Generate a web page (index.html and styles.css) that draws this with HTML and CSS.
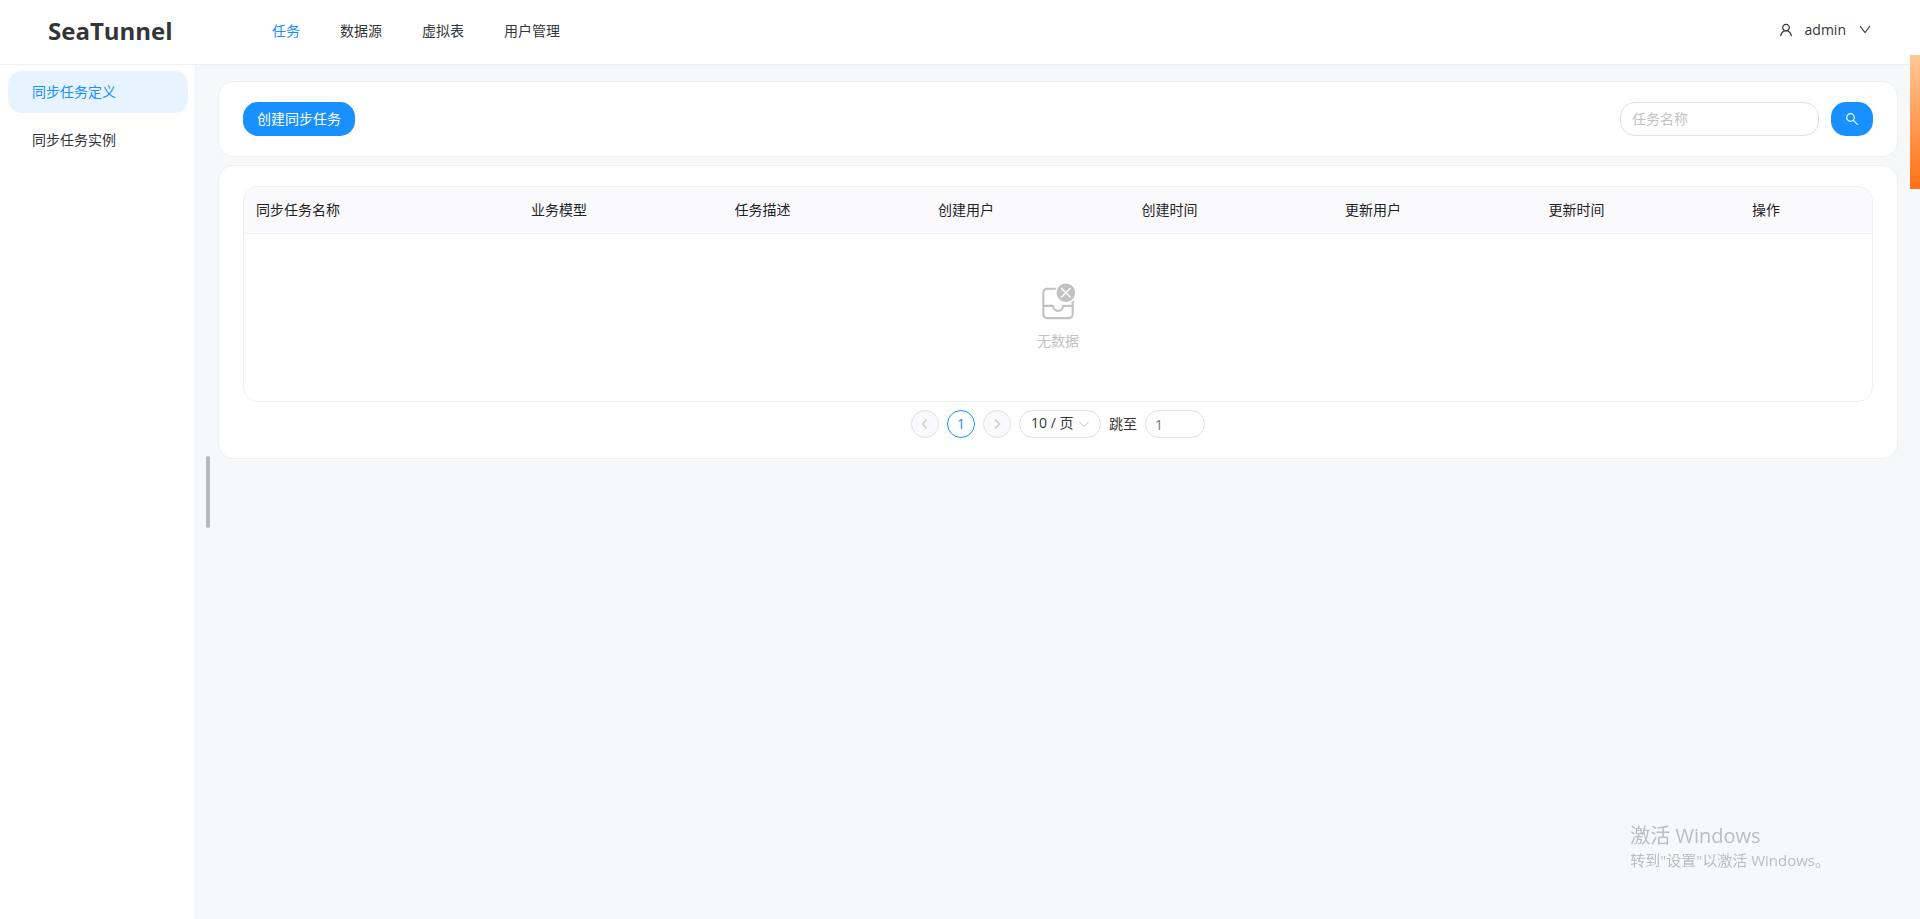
FILE: index.html
```html
<!DOCTYPE html>
<html lang="zh-CN">
<head>
<meta charset="utf-8">
<title>SeaTunnel</title>
<link rel="stylesheet" href="styles.css">
</head>
<body>
<header class="header">
  <h1 class="logo">SeaTunnel</h1>
  <nav class="nav">
    <a class="nav-link active" href="#tasks">任务</a>
    <a class="nav-link" href="#datasource">数据源</a>
    <a class="nav-link" href="#virtual">虚拟表</a>
    <a class="nav-link" href="#users">用户管理</a>
  </nav>
  <button class="user" type="button">
    <svg class="icon-user" viewBox="64 64 896 896" aria-hidden="true"><path fill="currentColor" d="M858.5 763.6a374 374 0 0 0-80.600-119.500 375.630 375.630 0 0 0-119.500-80.600c-.4-.2-.8-.3-1.200-.5C719.500 518 760 444.700 760 362c0-137-111-248-248-248S264 225 264 362c0 82.700 40.500 156 102.800 201.100-.4.2-.8.3-1.200.5-44.800 18.900-85 46-119.500 80.600a375.630 375.630 0 0 0-80.600 119.500A371.700 371.700 0 0 0 136 901.800a8 8 0 0 0 8 8.200h60c4.400 0 7.900-3.500 8-7.800 2-77.200 33-149.500 87.800-204.300 56.700-56.700 132-87.900 212.200-87.900s155.500 31.200 212.200 87.900C779 752.700 810 825 812 902.200c.1 4.400 3.600 7.800 8 7.800h60a8 8 0 0 0 8-8.200c-1-47.800-10.900-94.300-29.500-138.200zM512 534c-45.900 0-89.100-17.900-121.600-50.400S340 407.900 340 362c0-45.900 17.900-89.100 50.400-121.600S466.100 190 512 190s89.100 17.900 121.600 50.400S684 316.100 684 362c0 45.900-17.900 89.100-50.400 121.600S557.900 534 512 534z"/></svg>
    <span>admin</span>
    <svg class="icon-down" viewBox="0 0 14 14" aria-hidden="true"><path d="M2 3l5 6.500L12 3" fill="none" stroke="currentColor" stroke-width="1.1"/></svg>
  </button>
</header>
<div class="layout">
  <aside class="sidebar">
    <a class="menu-item active" href="#definition">同步任务定义</a>
    <a class="menu-item" href="#instance">同步任务实例</a>
  </aside>
  <main class="content">
    <section class="card toolbar">
      <button class="btn" type="button">创建同步任务</button>
      <form class="search">
        <input class="search-input" type="text" placeholder="任务名称" aria-label="任务名称">
        <button class="btn" type="button" aria-label="搜索">
          <svg class="icon-search" viewBox="0 0 14 14" aria-hidden="true"><g fill="none" stroke="currentColor" stroke-width="1.2" stroke-linecap="round"><circle cx="5.500" cy="5.500" r="3.800"/><path d="M8.400 8.400l4 4"/></g></svg>
        </button>
      </form>
    </section>
    <section class="card">
      <div class="table-wrap">
        <table class="table">
          <colgroup><col class="col-name"><col span="6"><col class="col-action"></colgroup>
          <thead>
            <tr><th>同步任务名称</th><th>业务模型</th><th>任务描述</th><th>创建用户</th><th>创建时间</th><th>更新用户</th><th>更新时间</th><th>操作</th></tr>
          </thead>
          <tbody>
            <tr><td class="empty" colspan="8">
              <svg class="icon-empty" viewBox="0 0 28 28" aria-hidden="true"><g fill="currentColor"><path d="M26 7.5C26 11.0899 23.0899 14 19.5 14C15.9101 14 13 11.0899 13 7.5C13 3.91015 15.9101 1 19.5 1C23.0899 1 26 3.91015 26 7.5ZM16.8536 4.14645C16.6583 3.95118 16.3417 3.95118 16.1464 4.14645C15.9512 4.34171 15.9512 4.65829 16.1464 4.85355L18.7929 7.5L16.1464 10.1464C15.9512 10.3417 15.9512 10.6583 16.1464 10.8536C16.3417 11.0488 16.6583 11.0488 16.8536 10.8536L19.5 8.20711L22.1464 10.8536C22.3417 11.0488 22.6583 11.0488 22.8536 10.8536C23.0488 10.6583 23.0488 10.3417 22.8536 10.1464L20.2071 7.5L22.8536 4.85355C23.0488 4.65829 23.0488 4.34171 22.8536 4.14645C22.6583 3.95118 22.3417 3.95118 22.1464 4.14645L19.5 6.79289L16.8536 4.14645Z"/><path d="M25 22.75V12.5991C24.5572 13.0765 24.053 13.4961 23.5 13.8454V16H17.5L17.3982 16.0068C17.0322 16.0565 16.75 16.3703 16.75 16.75C16.75 18.2688 15.5188 19.5 14 19.5C12.4812 19.5 11.25 18.2688 11.25 16.75L11.2432 16.6482C11.1935 16.2822 10.8797 16 10.5 16H4.5V7.25C4.5 6.2835 5.2835 5.5 6.25 5.5H12.2696C12.4146 4.97463 12.6153 4.47237 12.865 4H6.25C4.45507 4 3 5.45507 3 7.25V22.75C3 24.5449 4.45507 26 6.25 26H21.75C23.5449 26 25 24.5449 25 22.75ZM4.5 22.75V17.5H9.81597L9.85751 17.7041C10.2905 19.5919 11.9808 21 14 21L14.215 20.9947C16.2095 20.8953 17.842 19.4209 18.184 17.5H23.5V22.75C23.5 23.7165 22.7165 24.5 21.75 24.5H6.25C5.2835 24.5 4.5 23.7165 4.5 22.75Z"/></g></svg>
              <span class="empty-text">无数据</span>
            </td></tr>
          </tbody>
        </table>
      </div>
      <div class="pagination">
        <button class="page" type="button" disabled aria-label="上一页"><svg class="icon-page" viewBox="0 0 16 16" aria-hidden="true"><path d="M10 3L5.500 8l4.500 5" fill="none" stroke="currentColor" stroke-width="1.400"/></svg></button>
        <button class="page current" type="button">1</button>
        <button class="page" type="button" disabled aria-label="下一页"><svg class="icon-page" viewBox="0 0 16 16" aria-hidden="true"><path d="M6 3l4.500 5L6 13" fill="none" stroke="currentColor" stroke-width="1.400"/></svg></button>
        <div class="size">
          <select class="size-select" aria-label="每页条数"><option>10 / 页</option><option>20 / 页</option></select>
          <svg class="size-arrow" viewBox="0 0 12 12" aria-hidden="true"><path d="M1.500 4L6 8.500 10.500 4" fill="none" stroke="currentColor"/></svg>
        </div>
        <label for="jump">跳至</label>
        <input class="jump" id="jump" type="text" value="1">
      </div>
    </section>
  </main>
</div>
<div class="resize-handle"></div>
<div class="side-tab"></div>
<div class="watermark">
  <p class="watermark-title">激活 Windows</p>
  <p class="watermark-text">转到"设置"以激活 Windows。</p>
</div>
</body>
</html>
```
FILE: styles.css
```css
* {
  box-sizing: border-box;
}

body {
  display: flex;
  flex-direction: column;
  min-height: 100vh;
  margin: 0;
  color: #333639;
  background: #f7f8fa;
  font: 14px/22px "Open Sans", "Noto Sans CJK SC", sans-serif;
}

a {
  color: inherit;
  text-decoration: none;
}

button,
input,
select {
  margin: 0;
  font: inherit;
  color: inherit;
}

svg {
  display: block;
}

.header {
  display: flex;
  align-items: center;
  height: 65px;
  padding: 0 48px 2px;
  background: #fff;
  border-bottom: 1px solid #efeff5;
}

.logo {
  width: 224px;
  margin: 0;
  font-size: 24px;
  line-height: 32px;
  font-weight: 700;
}

.nav {
  display: flex;
  gap: 40px;
}

.nav-link.active {
  color: #1890ff;
}

.user {
  display: flex;
  align-items: center;
  gap: 12px;
  margin-left: auto;
  padding: 0 0 2px;
  border: 0;
  background: none;
}

.icon-user,
.icon-down,
.icon-search {
  width: 14px;
  height: 14px;
}

.layout {
  display: flex;
  flex: 1;
}

.sidebar {
  flex: none;
  width: 196px;
  padding: 6px 7px 0 8px;
  background: #fff;
  border-right: 1px solid #efeff5;
}

.menu-item {
  display: block;
  margin-bottom: 6px;
  padding: 10px 24px;
  border-radius: 14px;
}

.menu-item.active {
  color: #1890ff;
  background: #e7f3ff;
}

.content {
  display: flex;
  flex: 1;
  flex-direction: column;
  gap: 8px;
  min-width: 0;
  padding: 16px 22px;
}

.card {
  padding: 20px 24px;
  background: #fff;
  border: 1px solid #efeff5;
  border-radius: 15px;
}

.toolbar {
  display: flex;
  justify-content: space-between;
}

.btn {
  height: 34px;
  padding: 0 14px;
  color: #fff;
  background: #1890ff;
  border: 0;
  border-radius: 15px;
}

.search {
  display: flex;
  gap: 12px;
}

.search-input {
  width: 199px;
  height: 34px;
  padding: 0 11px 2px;
  background: #fff;
  border: 1px solid #e0e0e6;
  border-radius: 15px;
}

.search-input::placeholder {
  color: #c2c2c2;
}

.table-wrap {
  overflow: hidden;
  border: 1px solid #efeff5;
  border-radius: 15px;
}

.table {
  width: 100%;
  table-layout: fixed;
  border-collapse: separate;
  border-spacing: 0;
}

.col-name {
  width: 275px;
}

.col-action {
  width: 132px;
}

.table th {
  padding: 12px;
  color: #1f2225;
  background: #fafafc;
  border-bottom: 1px solid #efeff5;
  font-weight: 400;
  text-align: left;
}

.empty {
  padding: 48px 0 49px;
  color: #c2c2c2;
  text-align: center;
}

.icon-empty {
  width: 40px;
  height: 40px;
  margin: 0 auto 8px;
}

.empty-text {
  display: block;
}

.pagination {
  display: flex;
  align-items: center;
  justify-content: center;
  gap: 8px;
  margin-top: 8px;
}

.page {
  display: flex;
  align-items: center;
  justify-content: center;
  width: 28px;
  height: 28px;
  padding: 0;
  color: #c2c2c2;
  background: #fafafc;
  border: 1px solid #e0e0e6;
  border-radius: 14px;
}

.page.current {
  color: #1890ff;
  background: #fff;
  border-color: #1890ff;
}

.icon-page {
  width: 14px;
  height: 14px;
}

.size {
  position: relative;
}

.size-select {
  display: block;
  width: 82px;
  height: 28px;
  padding: 0 11px 2px;
  appearance: none;
  background: #fff;
  border: 1px solid #e0e0e6;
  border-radius: 14px;
}

.size-arrow {
  position: absolute;
  top: 8px;
  right: 11px;
  width: 12px;
  height: 12px;
  color: #c2c2c2;
  pointer-events: none;
}

.jump {
  width: 60px;
  height: 28px;
  padding: 0 9px;
  color: #767c82;
  background: #fff;
  border: 1px solid #e0e0e6;
  border-radius: 14px;
}

.resize-handle {
  position: fixed;
  top: 456px;
  left: 206px;
  width: 4px;
  height: 72px;
  background: #b8b9bb;
  border-radius: 2px;
}

.side-tab {
  position: fixed;
  top: 55px;
  right: 0;
  width: 10px;
  height: 134px;
  background: linear-gradient(#ffc898, #ff7014);
}

.watermark {
  position: fixed;
  right: 90px;
  bottom: 48px;
  color: #bcbdbf;
}

.watermark-title,
.watermark-text {
  margin: 0;
}

.watermark-title {
  font-size: 20px;
  line-height: 26px;
}

.watermark-text {
  font-size: 15px;
  line-height: 22px;
}
```
